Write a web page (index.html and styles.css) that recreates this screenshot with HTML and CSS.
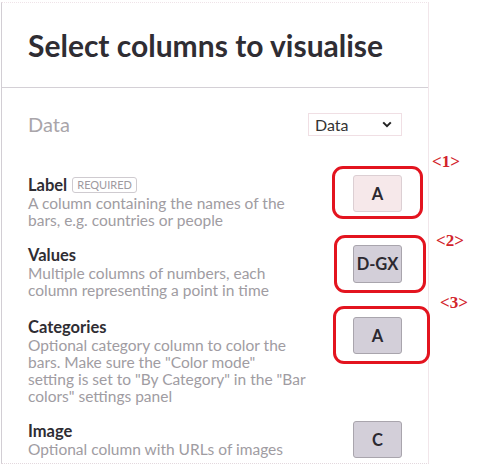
FILE: index.html
```html
<!DOCTYPE html>
<html>
<head>
<meta charset="utf-8">
<link rel="stylesheet" href="styles.css">
</head>
<body>
<div class="panel">
  <div class="header">
    <h1 class="title">Select columns to visualise</h1>
  </div>
  <div class="body">
    <div class="data-row">
      <div class="data-label">Data</div>
      <div class="select">
        <span>Data</span>
        <svg class="chev" width="10" height="7" viewBox="0 0 10 7"><path d="M1.2 1.4 L5 5.2 L8.8 1.4" fill="none" stroke="#222" stroke-width="2"/></svg>
      </div>
    </div>

    <div class="row row-label">
      <div class="text">
        <div class="name">Label <span class="badge">REQUIRED</span></div>
        <div class="desc">A column containing the names of the<br>bars, e.g. countries or people</div>
      </div>
      <div class="btn-wrap">
        <div class="btn pink">A</div>
        <div class="mark mark1"></div>
        <div class="num num1">&lt;1&gt;</div>
      </div>
    </div>

    <div class="row row-values">
      <div class="text">
        <div class="name">Values</div>
        <div class="desc">Multiple columns of numbers, each<br>column representing a point in time</div>
      </div>
      <div class="btn-wrap">
        <div class="btn gray">D-GX</div>
        <div class="mark mark2"></div>
        <div class="num num2">&lt;2&gt;</div>
      </div>
    </div>

    <div class="row row-cat">
      <div class="text">
        <div class="name">Categories</div>
        <div class="desc">Optional category column to color the<br>bars. Make sure the "Color mode"<br>setting is set to "By Category" in the "Bar<br>colors" settings panel</div>
      </div>
      <div class="btn-wrap">
        <div class="btn gray">A</div>
        <div class="mark mark3"></div>
        <div class="num num3">&lt;3&gt;</div>
      </div>
    </div>

    <div class="row row-image">
      <div class="text">
        <div class="name">Image</div>
        <div class="desc">Optional column with URLs of images</div>
      </div>
      <div class="btn-wrap">
        <div class="btn gray">C</div>
      </div>
    </div>
  </div>
</div>
</body>
</html>
```

FILE: styles.css
```css
html, body {
  margin: 0;
  padding: 0;
  background: #fff;
}
body {
  font-family: "Lato", "Noto Sans", sans-serif;
  color: #333035;
  padding-top: 2px;
}
.panel {
  margin-left: 1px;
  width: 428px;
  border-top: 1px dotted #efe3e8;
  border-left: 1px solid #d2ced4;
  border-right: 1px solid #f1e6ea;
  border-bottom: 1px dotted #e3d8de;
  height: 462px;
  box-sizing: border-box;
}
.header {
  height: 84px;
  border-bottom: 1px solid #d4d0d6;
  display: flex;
  align-items: center;
  padding-left: 26px;
}
.title {
  margin: 0;
  font-size: 30px;
  font-weight: 700;
  color: #2f2d33;
}
.body {
  padding: 0 26px 0 26px;
}
.data-row {
  display: flex;
  justify-content: space-between;
  align-items: center;
  margin-top: 24px;
}
.data-label {
  font-size: 20px;
  color: #a9a5aa;
  font-weight: 400;
}
.select {
  width: 94px;
  height: 23px;
  box-sizing: border-box;
  border: 1px solid #f0dfe4;
  display: flex;
  align-items: center;
  justify-content: space-between;
  padding: 0 9px 0 6px;
  font-size: 16px;
  color: #333;
}
.row {
  display: flex;
  justify-content: space-between;
  align-items: flex-start;
}
.row-label { margin-top: 39px; }
.row-values { margin-top: 16px; }
.row-cat { margin-top: 18px; }
.row-image { margin-top: 16px; }
.text {
  padding-top: 1px;
}
.name {
  font-size: 16.5px;
  font-weight: 700;
  line-height: 18px;
  color: #2f2d33;
  display: flex;
  align-items: center;
}
.badge {
  margin-left: 5px;
  font-size: 11px;
  font-weight: 400;
  color: #9e9aa0;
  border: 1px solid #cfcbd0;
  border-radius: 3px;
  padding: 1px 4px;
  line-height: 12px;
}
.desc {
  font-size: 15.5px;
  line-height: 17px;
  color: #a09ca2;
  margin-top: 1px;
}
.btn-wrap {
  position: relative;
}
.btn {
  width: 49px;
  height: 37px;
  box-sizing: border-box;
  border-radius: 3px;
  display: flex;
  align-items: center;
  justify-content: center;
  font-size: 16.5px;
  font-weight: 700;
  color: #2b2930;
}
.pink {
  background: #f6e8ea;
  border: 1px solid #dccfd3;
}
.gray {
  background: #d3cfd9;
  border: 1px solid #a9a5ad;
}
.row-values .btn { height: 38px; }
.mark {
  position: absolute;
  border: 3.5px solid #e3141f;
  border-radius: 11px;
}
.mark1 { left: -21px; right: -21px; top: -9px; bottom: -7px; }
.mark2 { left: -19px; right: -24px; top: -10px; bottom: -10px; }
.mark3 { left: -20px; right: -28px; top: -11px; bottom: -10px; }
.num {
  position: absolute;
  font-family: "Liberation Serif", serif;
  font-weight: 700;
  font-size: 17px;
  line-height: 17px;
  color: #d2232b;
  white-space: nowrap;
}
.num1 { left: 79px; top: -22px; }
.num2 { left: 83px; top: -13px; }
.num3 { left: 87px; top: -23px; }
```
